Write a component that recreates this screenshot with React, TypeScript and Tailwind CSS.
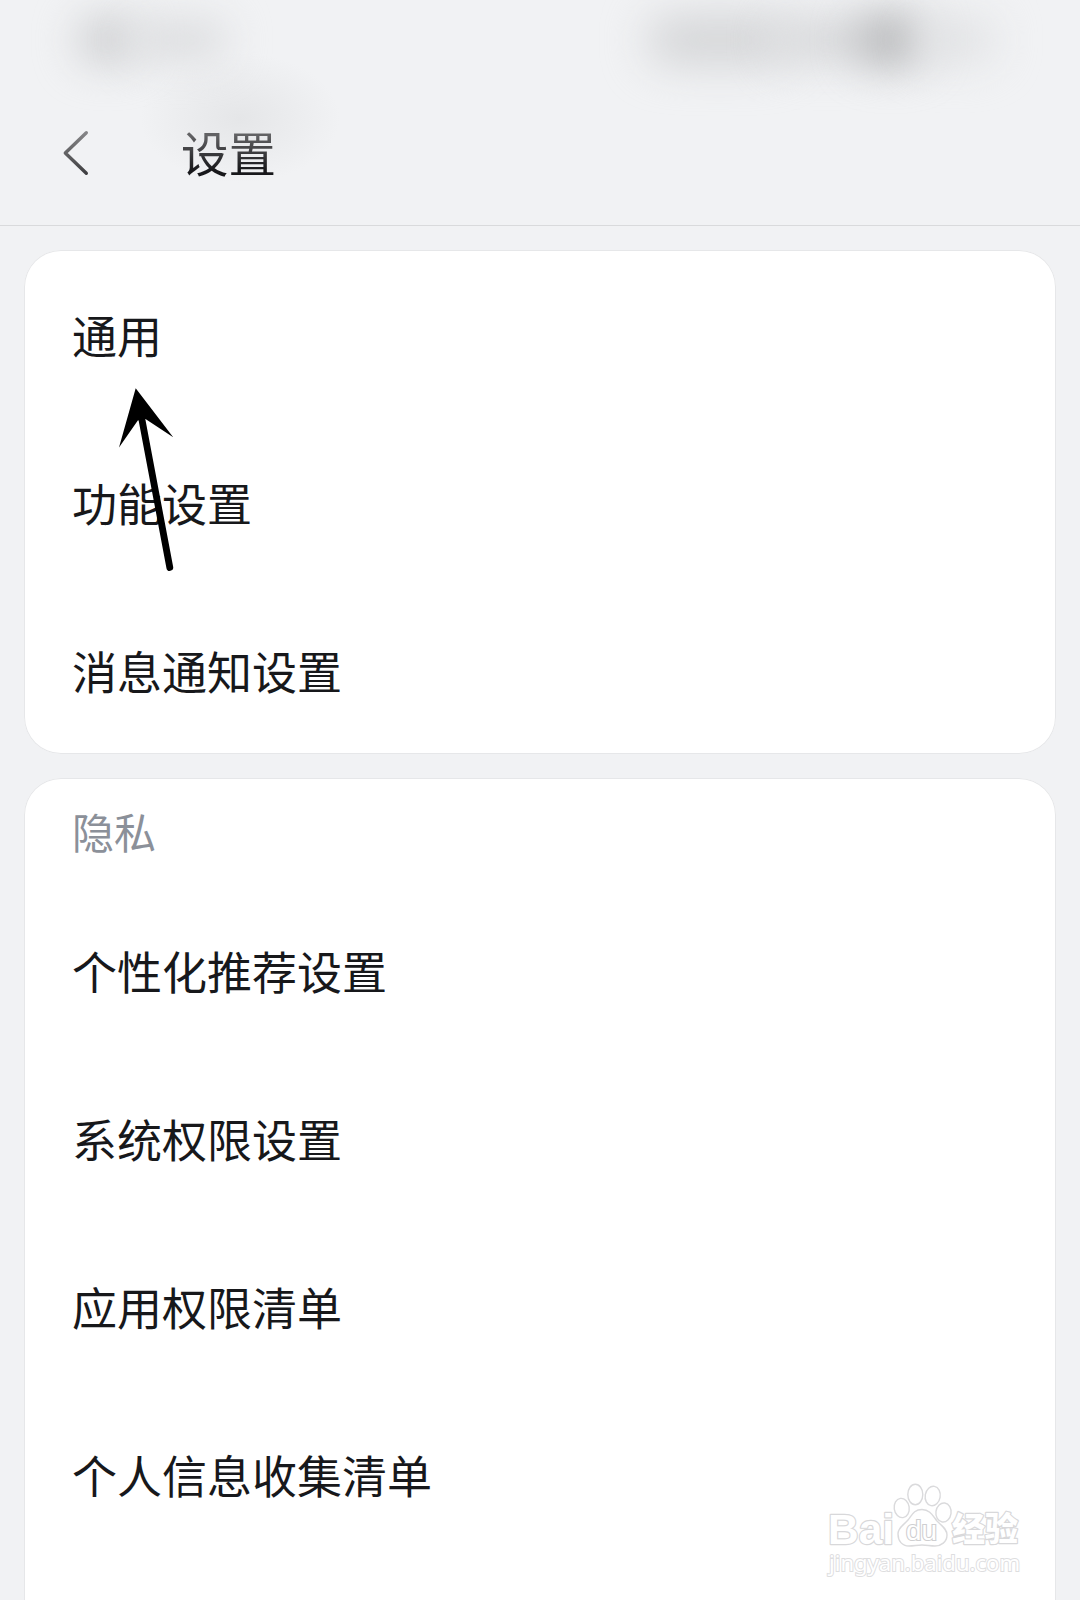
const generalItems = ['通用', '功能设置', '消息通知设置'];
const privacyItems = ['个性化推荐设置', '系统权限设置', '应用权限清单', '个人信息收集清单'];

function Row({ label }: { label: string }) {
  return (
    <li className="flex h-[168px] items-center px-12 text-[45px] leading-none text-[#17181b]">
      {label}
    </li>
  );
}

function StatusBar() {
  return (
    <div className="flex h-20 items-center justify-between pr-[85px] pl-[76px]" aria-hidden="true">
      <div className="flex items-center">
        <span className="h-12 w-16 rounded-full bg-[#d0d1d3] blur-[20px]" />
        <span className="-ml-2 h-10 w-24 rounded-full bg-[#dcdddf] blur-[20px]" />
      </div>
      <div className="flex items-center">
        <span className="h-12 w-36 rounded-full bg-[#d3d4d6] blur-[22px]" />
        <span className="-ml-5 h-11 w-28 rounded-full bg-[#d8d9db] blur-[20px]" />
        <span className="-ml-7 h-13 w-18 rounded-full bg-[#b8b9bb] blur-[21px]" />
        <span className="-ml-3 h-11 w-20 rounded-full bg-[#e0e1e3] blur-[22px]" />
      </div>
    </div>
  );
}

function BackIcon() {
  return (
    <svg width="28" height="48" viewBox="0 0 28 48" fill="none">
      <defs>
        <linearGradient id="back" x1="0" y1="0" x2="0" y2="1">
          <stop offset="0" stopColor="#858587" />
          <stop offset="1" stopColor="#404042" />
        </linearGradient>
      </defs>
      <path d="M25.3 3.8L4.3 24L25.3 44.2" stroke="url(#back)" strokeWidth="3.4" strokeLinecap="round" strokeLinejoin="round" />
    </svg>
  );
}

function Arrow() {
  return (
    <svg className="absolute left-[110px] top-[380px]" width="70" height="200" viewBox="110 380 70 200">
      <path d="M135.7 388.3L119 447.6L137.8 420.5L145.5 419L173.2 437.3Z" fill="#000" />
      <path d="M140.5 412L169.8 567.5" stroke="#000" strokeWidth="6.8" strokeLinecap="round" />
    </svg>
  );
}

function Watermark() {
  return (
    <svg
      className="absolute right-[50px] bottom-5 [font-family:'Liberation_Sans','Noto_Sans_CJK_SC',sans-serif]"
      width="210"
      height="100"
      viewBox="820 1480 210 100"
    >
      <g fill="#fff" stroke="#d8d8da" strokeWidth="2.4" strokeLinejoin="round" className="[paint-order:stroke]">
        <text x="828" y="1544" fontSize="43" fontWeight="700" textLength="66" lengthAdjust="spacingAndGlyphs">Bai</text>
        <text x="952" y="1541" fontSize="33" fontWeight="900" textLength="66" lengthAdjust="spacingAndGlyphs">经验</text>
      </g>
      <g fill="#fff" stroke="#dadadc" strokeWidth="1.4">
        <ellipse cx="901.7" cy="1508" rx="7.5" ry="9.7" transform="rotate(-8 901.7 1508)" />
        <ellipse cx="915.3" cy="1494.5" rx="7.5" ry="10.2" />
        <ellipse cx="932.7" cy="1496" rx="7.5" ry="9.8" transform="rotate(10 932.7 1496)" />
        <ellipse cx="943.5" cy="1512.5" rx="7.6" ry="9.6" transform="rotate(8 943.5 1512.5)" />
        <path d="M922 1509.5C930 1509.5 933 1516 937 1521C942 1526 947 1529 947 1535C947 1542 941 1546 935 1546C930 1546 927 1545 922 1545C917 1545 914 1546 909 1546C902 1546 898 1541 898 1534C898 1527 904 1525 908 1520C912 1515 914 1509.5 922 1509.5Z" />
      </g>
      <text x="906" y="1540" fontSize="27" textLength="31" lengthAdjust="spacingAndGlyphs" fill="#fff" stroke="#cfcfd1" strokeWidth="2.2" className="[paint-order:stroke]">du</text>
      <text
        x="829" y="1570.5" fontSize="22.5" textLength="191" lengthAdjust="spacingAndGlyphs"
        fill="#fff" stroke="#dededf" strokeWidth="2" className="[font-family:'Noto_Sans',sans-serif] [paint-order:stroke]"
      >
        jingyan.baidu.com
      </text>
    </svg>
  );
}

export default function App() {
  return (
    <div
      lang="zh-CN"
      className="relative flex h-[1600px] w-[1080px] flex-col overflow-hidden bg-[#f1f2f4] [font-family:'Noto_Sans_CJK_SC',sans-serif]"
    >
      <header className="h-[226px] shrink-0 border-b border-[#d9dadc] bg-[radial-gradient(ellipse_100px_65px_at_240px_118px,#e5e6e8,#e5e6e800)]">
        <StatusBar />
        <div className="flex h-[146px] items-center gap-[92px] pl-[61px]">
          <BackIcon />
          <h1 className="bg-gradient-to-b from-[#626264] from-15% to-[#18181b] to-85% bg-clip-text pb-[2px] text-[47.5px] leading-none font-normal text-transparent">
            设置
          </h1>
        </div>
      </header>
      <main className="flex flex-col gap-6 px-6 pt-6">
        <ul className="rounded-[37px] bg-white inset-ring inset-ring-[#e6e7e9]">
          {generalItems.map((label) => (
            <Row key={label} label={label} />
          ))}
        </ul>
        <section className="h-[900px] rounded-[37px] bg-white inset-ring inset-ring-[#e6e7e9]">
          <h2 className="flex h-[108px] items-center px-12 pb-[2px] text-[42px] leading-none font-normal text-[#8b9099]">隐私</h2>
          <ul>
            {privacyItems.map((label) => (
              <Row key={label} label={label} />
            ))}
          </ul>
        </section>
      </main>
      <Arrow />
      <Watermark />
    </div>
  );
}
